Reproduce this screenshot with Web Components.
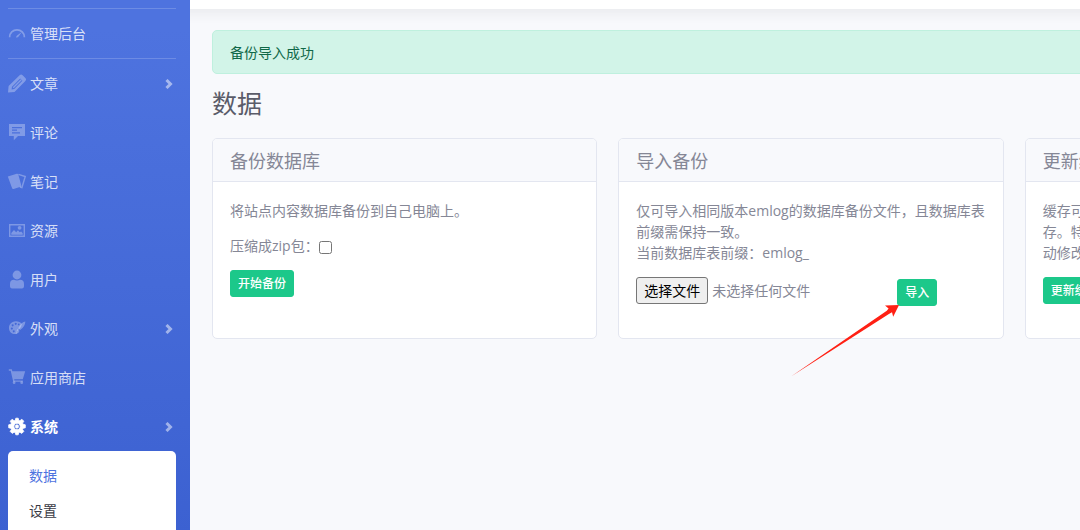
<!DOCTYPE html>
<html lang="zh-CN">
<head>
<meta charset="utf-8">
<meta name="viewport" content="width=device-width, initial-scale=1">
<title>数据 - emlog</title>
<style>
body{margin:0;background:#f8f9fc;color:#858796;font:400 14px/21px "Open Sans","Noto Sans CJK SC",sans-serif}
</style>
</head>
<body>
<admin-shell>
  <side-bar slot="sidebar">
    <side-item icon="dash" divided>管理后台</side-item>
    <side-item icon="pencil" more>文章</side-item>
    <side-item icon="comment">评论</side-item>
    <side-item icon="notes">笔记</side-item>
    <side-item icon="image">资源</side-item>
    <side-item icon="user">用户</side-item>
    <side-item icon="paint" more>外观</side-item>
    <side-item icon="cart">应用商店</side-item>
    <side-item icon="gear" more active>系统</side-item>
    <side-submenu>
      <side-link active>数据</side-link>
      <side-link>设置</side-link>
    </side-submenu>
  </side-bar>
  <alert-box>备份导入成功</alert-box>
  <page-title>数据</page-title>
  <card-row>
    <data-card>
      <span slot="title">备份数据库</span>
      <card-text>将站点内容数据库备份到自己电脑上。</card-text>
      <check-field>压缩成zip包：</check-field>
      <action-button>开始备份</action-button>
    </data-card>
    <data-card>
      <span slot="title">导入备份</span>
      <card-text>仅可导入相同版本emlog的数据库备份文件，且数据库表前缀需保持一致。<br>当前数据库表前缀：emlog_</card-text>
      <import-form></import-form>
    </data-card>
    <data-card>
      <span slot="title">更新缓存</span>
      <card-text>缓存可以加快站点的加载速度。通常系统会自动更新缓存。特殊情况需要手动更新，比如缓存文件被修改、手动修改数据库等。</card-text>
      <action-button>更新缓存</action-button>
    </data-card>
  </card-row>
</admin-shell>
<script>
function define(name, html, setup) {
  const tpl = document.createElement('template');
  tpl.innerHTML = html;
  customElements.define(name, class extends HTMLElement {
    constructor() {
      super();
      this.attachShadow({mode: 'open'}).append(tpl.content.cloneNode(true));
    }
    connectedCallback() { if (setup) setup(this, this.shadowRoot); }
  });
}

const icons = {
  dash: '<path d="M1.600 12.200a7.400 7.400 0 0 1 14.800 0" fill="none" stroke="currentColor" stroke-width="1.700"/><path d="M8 12.600Q8.200 10.800 9.700 10L13.800 7l-3 4.200Q10 12.800 8 12.600z"/>',
  pencil: '<path d="M0 17.500L.6 11 11.600.2Q13.200-1 14.600.3l3 3q1.200 1.300-.2 2.800L6.500 16.900zM4 11.800l-.4 2.600 2.600-.4 8.200-8.200-2.200-2.200z" fill-rule="evenodd"/><path d="M5.200 12.800l8-8" stroke="currentColor" stroke-width="1.300"/>',
  comment: '<path d="M1 0h16v12h-7l-4.200 4.300V12H1zM4 3v1.200h10V3zM4 5.600v1.200h5V5.600zM4 8.200v1.200h8V8.200z" fill-rule="evenodd"/>',
  notes: '<path d="M-.2 3.600L8.800.7Q10 .4 10.300 1.400l3 11.100q.2 1-.7 1.300l-7 2.100q-1.200.3-1.500-.7z"/><path d="M10.500 1.400l6.700 2.200-3.300 11-2-.6" fill="none" stroke="currentColor" stroke-width="1.500"/>',
  image: '<path d="M1 2h16v13H1zM2.400 3.400v10.200h13.200V3.400z" fill-rule="evenodd"/><path d="M3.300 12.700V11L6 8l2.200 2.200L10 8.200l1.600 2 1.600-.8 1.500 1.800v1.500z"/><circle cx="11.600" cy="5.800" r="1.900"/>',
  user: '<circle cx="9" cy="4" r="4.400"/><path d="M2 15.600V13q0-4.200 4-4.200 3 1.200 6 0 4 0 4 4.200v2.600q0 1.800-1.800 1.800H3.800Q2 17.400 2 15.600z"/>',
  paint: '<path d="M8 1.200C3 1.300.6 5 1 8.800c.5 4 4 6 7.200 5.100 1.600-.5 1-1.600 1-2.400l3.800-4.400.9-3.200C12.600 2 10.400 1.200 8 1.200zM3.800 7.600a1 1 0 1 0 .1 0zM4.600 4.300a1 1 0 1 0 .1 0zM7.700 2.700a1 1 0 1 0 .1 0zM5.700 10.300a1 1 0 1 0 .1 0zM10.700 3.500a.9.900 0 1 0 .1 0z" fill-rule="evenodd"/><path d="M17.400 1.400q-3.800.2-7.200 6.900l1.900 1.800q5-3.600 5.300-8.700zM9.600 8.900l1.900 1.800q-.6 3-4 3 1.500-1.300 1.100-2.900 0-1.200 1-1.900z"/>',
  cart: '<path d="M.8.300h3l.6 1.900H17.200l-2.400 8H6.200l.3 1.300h8.400v1.300H5.200L2.700 1.700H.8z"/><circle cx="6.100" cy="13.700" r="1.400"/><circle cx="13.700" cy="13.700" r="1.400"/>',
  gear: '<path d="M7.300 2.300L7.800.2h2.400l.5 2.100 1.200.5L13.800 1.200l2 2-1.200 1.900.5 1.200 2.200.5v3l-2.200.5-.5 1.200 1.200 1.900-2 2-1.900-1.200-1.200.5-.5 2.100H7.800l-.5-2.100-1.200-.5-1.900 1.200-2-2 1.200-1.900-.5-1.200-2.200-.5v-3l2.200-.5.5-1.200L2.200 3.200l2-2 1.900 1.600zM9 5.300a3.200 3.200 0 1 0 .1 0zM9 6.800a1.700 1.700 0 1 1-.1 0z" fill-rule="evenodd" stroke="currentColor" stroke-width=".8" stroke-linejoin="round"/>'
};

define('admin-shell', `<style>
:host{display:flex;min-height:100vh;overflow:hidden}
.main{flex:1;min-width:0;overflow:hidden}
.bar{height:9px;margin:0 -24px;background:#fff;box-shadow:0 2px 14px rgba(58,59,69,.12)}
main{box-sizing:border-box;min-width:1241px;padding:21px 21px 21px 22px}
</style><slot name="sidebar"></slot><div class="main"><div class="bar"></div><main><slot></slot></main></div>`);

define('side-bar', `<style>
:host{display:block;box-sizing:border-box;flex:none;width:190px;padding:8px 14px 0 8px;background:linear-gradient(#4e73df,#4e73df 30px,#3c61d1);color:rgba(255,255,255,.8)}
nav{border-top:1px solid rgba(255,255,255,.18)}
</style><nav aria-label="主菜单"><slot></slot></nav>`);

define('side-item', `<style>
:host{display:block;height:49px}
:host([divided]){border-bottom:1px solid rgba(255,255,255,.18)}
a{display:flex;align-items:center;gap:4px;height:49px;color:inherit;text-decoration:none}
svg.i{width:18px;height:18px;fill:currentColor;color:rgba(255,255,255,.3);overflow:visible}
.t{flex:1}
.m{display:none;width:8px;height:10px;margin-right:3px;fill:none;stroke:rgba(255,255,255,.5);stroke-width:3}
:host([more]) .m{display:block}
:host([active]) a{color:#fff;font-weight:700}
:host([active]) svg.i{color:#fff}
</style><a href="#"><svg class="i" viewBox="0 0 18 18" aria-hidden="true"></svg><span class="t"><slot></slot></span><svg class="m" viewBox="0 0 8 10" aria-hidden="true"><path d="M1.500 1l4 4-4 4"/></svg></a>`,
(el, root) => { root.querySelector('.i').innerHTML = icons[el.getAttribute('icon')]; });

define('side-submenu', `<style>
:host{display:block;padding:7px 0;background:#fff;border-radius:5px}
</style><slot></slot>`);

define('side-link', `<style>
:host{display:block}
a{display:block;padding:7px 21px;color:#3a3b45;text-decoration:none}
:host([active]) a{color:#4e73df}
</style><a href="#"><slot></slot></a>`);

define('alert-box', `<style>
:host{display:block;padding:11px 17px 10px;background:#d2f4e8;border:1px solid #bff0de;border-radius:5px;color:#0f6848}
</style><div role="status"><slot></slot></div>`);

define('page-title', `<style>
:host{display:block;padding:14px 0 20px}
h1{margin:0;font-size:25px;line-height:30px;font-weight:400;color:#5a5c69}
</style><h1><slot></slot></h1>`);

define('card-row', `<style>
:host{display:grid;grid-template-columns:repeat(3,1fr);gap:21px}
</style><slot></slot>`);

define('data-card', `<style>
:host{display:block;box-sizing:border-box;min-height:201px;background:#fff;border:1px solid #e3e6f0;border-radius:5px}
h2{margin:0;padding:11px 17px 9px;border-bottom:1px solid #e3e6f0;border-radius:4px 4px 0 0;background:#f8f9fc;font-size:18px;line-height:22px;font-weight:400}
.body{display:grid;gap:14px;justify-items:start;padding:18px 17px}
</style><h2><slot name="title"></slot></h2><div class="body"><slot></slot></div>`);

define('card-text', `<style>
:host{display:block}
p{margin:0}
</style><p><slot></slot></p>`);

define('check-field', `<style>
:host{display:block}
label{display:flex;align-items:center}
input{width:13px;height:13px;margin:3px 0 0}
</style><label><span><slot></slot></span><input type="checkbox"></label>`);

define('action-button', `<style>
:host{display:inline-block}
button{display:block;padding:4px 7px;border:1px solid #1cc88a;border-radius:3px;background:#1cc88a;color:#fff;font:inherit;font-size:12px;line-height:17px;font-weight:500}
</style><button type="button"><slot></slot></button>`);

define('import-form', `<style>
:host{display:block;width:100%}
form{display:flex;align-items:flex-start;margin:0}
.file{display:flex;align-items:center;gap:4px;flex:0 0 261px}
.pick{box-sizing:border-box;height:27px;padding:0 7px;border:1px solid #767676;border-radius:3px;background:#efefef;color:#000;font:inherit}
.send{position:relative;padding-top:2px}
svg{position:absolute;right:38px;top:27px;width:108px;height:74px;fill:#ff2014;pointer-events:none}
</style><form><div class="file"><button class="pick" type="button">选择文件</button><output>未选择任何文件</output><input type="file" aria-label="备份文件" hidden></div>
<div class="send"><action-button>导入</action-button><svg viewBox="0 0 108 74" aria-hidden="true"><path d="M0 72.500L95.800 6.800 97.600 4.600 94 1.500 108 1 102.200 12.800 101 8.200 98.300 9.800z"/></svg></div></form>`,
(el, root) => {
  const file = root.querySelector('input');
  root.querySelector('.pick').onclick = () => file.click();
  file.onchange = () => { root.querySelector('output').value = file.files.length ? file.files[0].name : '未选择任何文件'; };
});
</script>
</body>
</html>
